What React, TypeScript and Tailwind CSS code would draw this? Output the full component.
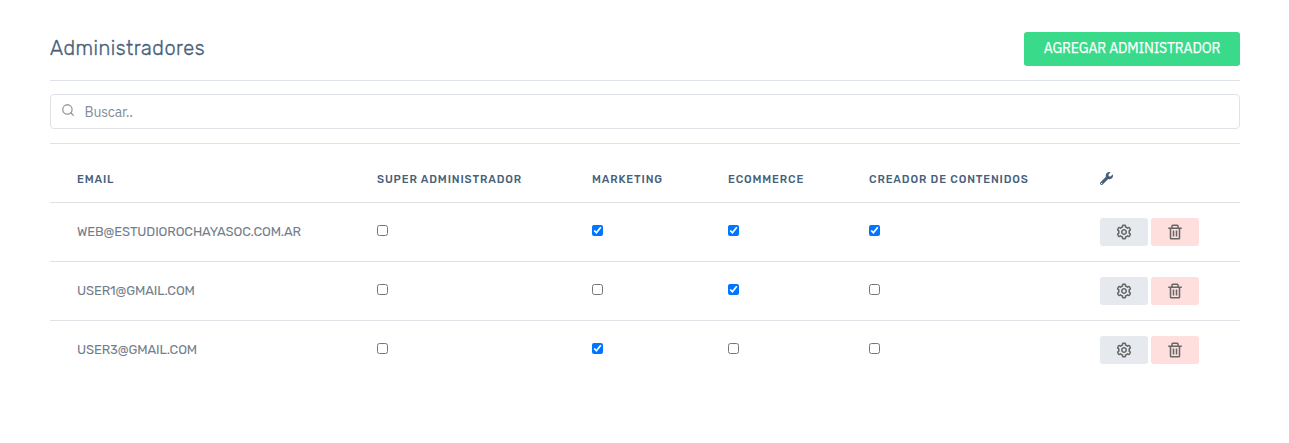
import { BiCog, BiTrash } from "react-icons/bi";
import { FaWrench } from "react-icons/fa";
import { FiSearch } from "react-icons/fi";

type Admin = { email: string; roles: boolean[] };

const admins: Admin[] = [
  { email: "WEB@ESTUDIOROCHAYASOC.COM.AR", roles: [false, true, true, true] },
  { email: "USER1@GMAIL.COM", roles: [false, false, true, false] },
  { email: "USER3@GMAIL.COM", roles: [false, true, false, false] },
];

const columns = "grid grid-cols-[300px_215px_136px_141px_231px_1fr] pl-[27px]";

export default function App() {
  return (
    <main className="h-[443px] bg-white px-[50px] pt-8 pr-[49px] font-['Rubik','Roboto',sans-serif] text-[#727e8c]">
      <header className="flex h-[49px] items-start justify-between border-b border-[#dfe3e7]">
        <h1 className="text-[20px] leading-[32px] font-light tracking-[0.5px] text-[#475f7b] [-webkit-text-stroke:0.35px_#475f7b]">Administradores</h1>
        <button className="h-[34px] w-[216px] rounded-[3px] bg-[#39da8a] pb-[2px] text-center font-['IBM_Plex_Sans','Roboto',sans-serif] text-[14px] leading-[31px] tracking-[-0.15px] whitespace-nowrap text-white [-webkit-text-stroke:0.25px_white]">
          AGREGAR ADMINISTRADOR
        </button>
      </header>
      <div className="mt-[13px] flex h-[35px] items-center rounded-[4px] border border-[#dfe3e7] pl-[10px]">
        <FiSearch className="mb-[3px] -ml-[0.5px] size-[14px] text-[#999]" strokeWidth={2.2} />
        <input
          className="ml-[10px] flex-1 bg-transparent pt-px font-['IBM_Plex_Sans','Roboto',sans-serif] text-[14px] leading-5 tracking-[-0.2px] outline-none placeholder:text-[#828d99]"
          placeholder="Buscar.."
        />
      </div>
      <section className="mt-[14px] border-t border-[#dfe3e7]">
        <div className={`${columns} h-[59px] border-b border-[#dfe3e7] pt-[27px] text-[11px] leading-[18px] font-medium whitespace-nowrap text-[#475f7b]`}>
          <span className="tracking-[0.86px]">EMAIL</span>
          <span className="tracking-[0.86px]">SUPER ADMINISTRADOR</span>
          <span className="tracking-[0.86px]">MARKETING</span>
          <span className="tracking-[0.86px]">ECOMMERCE</span>
          <span className="tracking-[0.86px]">CREADOR DE CONTENIDOS</span>
          <FaWrench className="mt-[0.5px] size-[13px]" />
        </div>
        {admins.map((admin) => (
          <div key={admin.email} className={`${columns} h-[59px] border-b border-[#dfe3e7] last:border-0`}>
            <span className="pt-5 text-[13px] leading-[18px] tracking-[-0.12px]">{admin.email}</span>
            {admin.roles.map((checked, i) => (
              <input key={i} type="checkbox" defaultChecked={checked} className="mt-[22px] size-[11px]" />
            ))}
            <div className="flex gap-[3px] pt-[15px] text-[#666]">
              <button className="flex h-7 w-12 items-center justify-center rounded-[3px] bg-[#e6eaee]">
                <BiCog className="size-[18px]" />
              </button>
              <button className="flex h-7 w-12 items-center justify-center rounded-[3px] bg-[#ffdede]">
                <BiTrash className="size-[18px]" />
              </button>
            </div>
          </div>
        ))}
      </section>
    </main>
  );
}
